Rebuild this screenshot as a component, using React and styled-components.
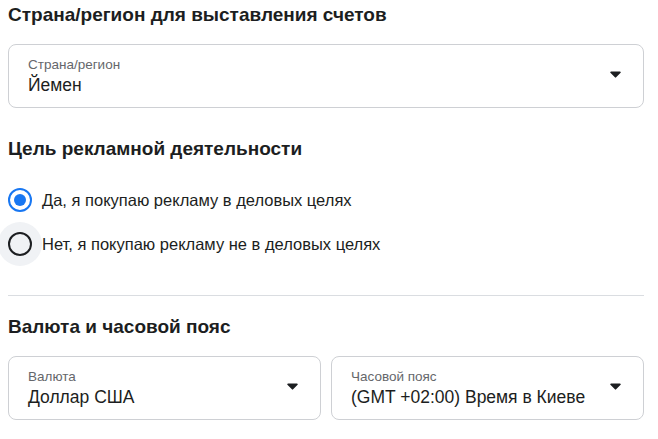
import React, { useState } from 'react';
import styled, { createGlobalStyle } from 'styled-components';

const GlobalStyle = createGlobalStyle`
  body {
    margin: 0;
    background: #ffffff;
    font-family: "Liberation Sans", Arial, Helvetica, sans-serif;
    color: #1c1e21;
  }
`;

const Page = styled.div`
  padding: 4px 14px 0 8px;
`;

const Heading = styled.h2`
  margin: 0 0 ${(p) => p.$gap || 18}px;
  font-size: 19px;
  line-height: 22px;
  font-weight: 700;
  color: #1c1e21;
`;

const Section = styled.section`
  margin-top: ${(p) => p.$before || 0}px;
  margin-bottom: ${(p) => p.$after || 0}px;
`;

const FieldRow = styled.div`
  display: grid;
  grid-template-columns: 1fr 1fr;
  gap: 10px;
`;

const SelectBox = styled.div`
  position: relative;
  height: 64px;
  box-sizing: border-box;
  border: 1px solid #ced0d4;
  border-radius: 8px;
  padding: 12px 48px 0 19px;
  background: #fff;
`;

const FieldLabel = styled.div`
  font-size: 13.5px;
  line-height: 16px;
  color: #65676b;
`;

const FieldValue = styled.div`
  font-size: 17.5px;
  line-height: 25px;
  color: #1c1e21;
  white-space: nowrap;
`;

const Caret = styled.svg`
  position: absolute;
  right: 22px;
  top: 26px;
  width: 11px;
  height: 7px;
`;

const Select = ({ label, value }) => (
  <SelectBox>
    <FieldLabel>{label}</FieldLabel>
    <FieldValue>{value}</FieldValue>
    <Caret viewBox="0 0 11 7">
      <path d="M1 0.5h9a0.8 0.8 0 0 1 0.6 1.3L6.1 6.3a0.8 0.8 0 0 1-1.2 0L0.4 1.8A0.8 0.8 0 0 1 1 0.5z" fill="#1c1e21" />
    </Caret>
  </SelectBox>
);

const RadioList = styled.div`
  display: flex;
  flex-direction: column;
`;

const RadioRow = styled.label`
  display: flex;
  align-items: center;
  height: 44px;
  cursor: pointer;
  font-size: 16.5px;
  color: #1c1e21;
`;

const RadioHalo = styled.span`
  display: flex;
  align-items: center;
  justify-content: center;
  flex: none;
  width: 44px;
  height: 44px;
  margin-left: -10px;
  border-radius: 50%;
  background: ${(p) => (p.$hover ? '#f0f2f5' : 'transparent')};
`;

const RadioCircle = styled.span`
  display: flex;
  align-items: center;
  justify-content: center;
  width: 24px;
  height: 24px;
  box-sizing: border-box;
  border-radius: 50%;
  border: 2px solid ${(p) => (p.$checked ? '#1877f2' : '#1c1e21')};
`;

const RadioDot = styled.span`
  width: 12px;
  height: 12px;
  border-radius: 50%;
  background: #1877f2;
`;

const Divider = styled.hr`
  margin: 0;
  border: none;
  border-top: 1px solid #dadde1;
`;

const options = [
  'Да, я покупаю рекламу в деловых целях',
  'Нет, я покупаю рекламу не в деловых целях',
];

export default function App() {
  const [choice, setChoice] = useState(0);

  return (
    <Page>
      <GlobalStyle />
      <Section $after={30}>
        <Heading>Страна/регион для выставления счетов</Heading>
        <Select label="Страна/регион" value="Йемен" />
      </Section>

      <Section $before={1} $after={29}>
        <Heading>Цель рекламной деятельности</Heading>
        <RadioList>
          {options.map((text, i) => (
            <RadioRow key={text} onClick={() => setChoice(i)}>
              <RadioHalo $hover={i === 1}>
                <RadioCircle $checked={choice === i}>
                  {choice === i && <RadioDot />}
                </RadioCircle>
              </RadioHalo>
              {text}
            </RadioRow>
          ))}
        </RadioList>
      </Section>

      <Divider />

      <Section $before={20}>
        <Heading $gap={18}>Валюта и часовой пояс</Heading>
        <FieldRow>
          <Select label="Валюта" value="Доллар США" />
          <Select label="Часовой пояс" value="(GMT +02:00) Время в Киеве" />
        </FieldRow>
      </Section>
    </Page>
  );
}
